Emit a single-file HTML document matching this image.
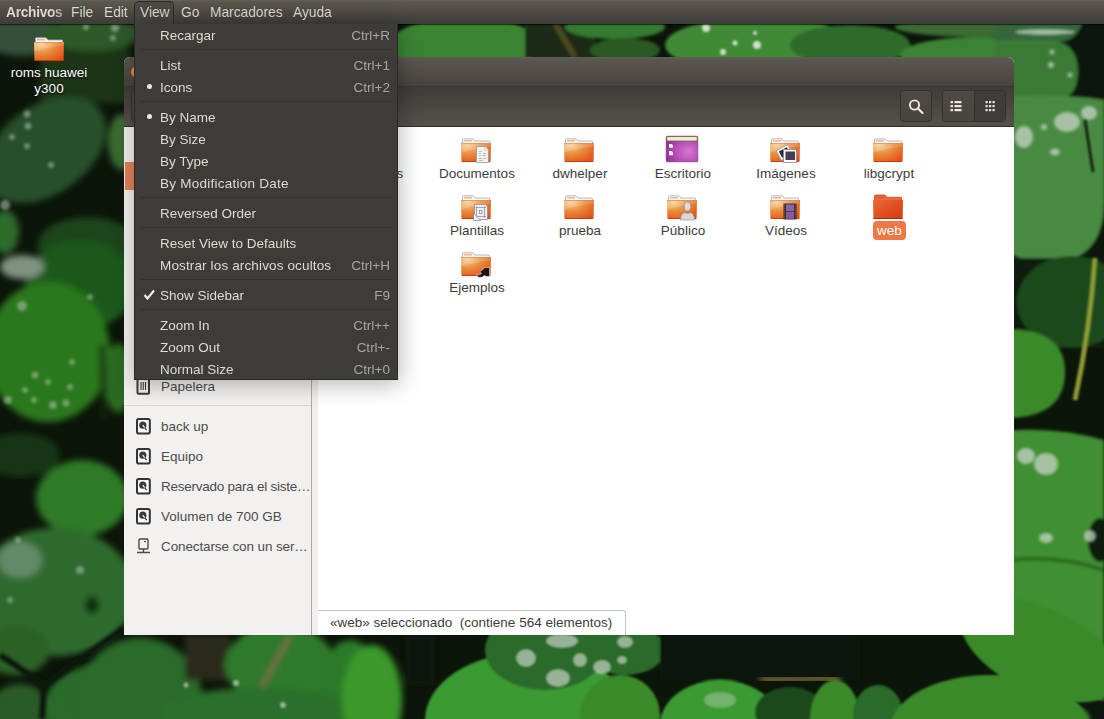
<!DOCTYPE html>
<html><head><meta charset="utf-8">
<style>
html,body{margin:0;padding:0;width:1104px;height:719px;overflow:hidden;background:#14260f;font-family:"Liberation Sans",sans-serif;}
body{position:relative;}
.abs{position:absolute;}
#bg{position:absolute;left:0;top:0;width:1104px;height:719px;}
#panel{position:absolute;left:0;top:0;width:1104px;height:24px;background:linear-gradient(#67635b,#5b5850 6%,#4a4742 60%,#3e3c38);box-shadow:0 1px 1px rgba(0,0,0,0.55);}
.pt{position:absolute;top:5px;font-size:13.75px;text-shadow:0 0 1px rgba(0,0,0,0.5);color:#dfdbd2;line-height:16px;white-space:nowrap;}
#viewbox{position:absolute;left:134px;top:1px;width:40px;height:24px;background:linear-gradient(#4d4b45,#44423d);border:1px solid #2c2b28;border-bottom:none;border-radius:5px 5px 0 0;box-sizing:border-box;}
#win{position:absolute;left:124px;top:57px;width:890px;height:578px;background:#fff;border-radius:6px 6px 0 0;overflow:hidden;}
#title{position:absolute;left:0;top:0;width:890px;height:29px;background:linear-gradient(#615d56,#5a5650 8%,#47443f);border-bottom:1px solid #3a3834;}
#toolbar{position:absolute;left:0;top:30px;width:890px;height:39px;background:linear-gradient(#3f3d39,#55514b);border-bottom:1px solid #2f2d2a;}
#sidebar{position:absolute;left:0;top:70px;width:187px;height:508px;background:#f2f1f0;border-right:1px solid #aeaba5;}
.btn{position:absolute;top:33px;height:32px;border:1px solid #34322e;border-radius:4px;box-sizing:border-box;background:linear-gradient(#4d4a45,#48453f);}
.lab{position:absolute;text-align:center;font-size:13.5px;color:#3c3c3c;line-height:16px;white-space:nowrap;}
.lab.sel{background:#f07746;color:#fff;border-radius:4px;height:19px;line-height:19px;}
.sb{position:absolute;left:161px;font-size:13.5px;color:#4c4c4c;white-space:nowrap;line-height:16px;}
.sbi{position:absolute;left:136px;}
#menu{position:absolute;left:134px;top:24px;width:264px;height:356px;background:#3e3c38;border:1px solid #2b2a27;border-top:none;box-sizing:border-box;box-shadow:1px 4px 22px rgba(0,0,0,0.3);}
.mi{position:absolute;margin-top:1px;left:25px;font-size:13.5px;color:#dfdbd2;white-space:nowrap;line-height:22px;}
.sc{position:absolute;margin-top:1px;right:7px;font-size:13.5px;color:#a9a59d;white-space:nowrap;line-height:22px;}
.sep{position:absolute;left:5px;width:252px;height:1px;background:#34322e;}
#status{position:absolute;left:318px;top:610px;width:308px;height:25px;background:#fff;border:1px solid #c9c6c0;border-bottom:none;border-left:none;box-sizing:border-box;border-radius:0 3px 0 0;}
</style></head><body>
<div id="bg"><svg width="1104" height="719" viewBox="0 0 1104 719" style="position:absolute;left:0;top:0">
<defs>
 <filter id="b5" x="-30%" y="-30%" width="160%" height="160%"><feGaussianBlur stdDeviation="5"/></filter>
 <filter id="b3" x="-30%" y="-30%" width="160%" height="160%"><feGaussianBlur stdDeviation="3"/></filter>
 <filter id="b2" x="-30%" y="-30%" width="160%" height="160%"><feGaussianBlur stdDeviation="1.6"/></filter>
 <filter id="b1" x="-30%" y="-30%" width="160%" height="160%"><feGaussianBlur stdDeviation="0.8"/></filter>
</defs>
<rect width="1104" height="719" fill="#0c150a"/>

<!-- ===== LEFT STRIP ===== -->
<g filter="url(#b3)">
 <rect x="40" y="48" width="90" height="55" fill="#1c3418"/>
 <ellipse cx="22" cy="36" rx="42" ry="20" fill="#34503a"/>
 <ellipse cx="92" cy="34" rx="50" ry="17" fill="#2f5a2c"/>
 <ellipse cx="45" cy="150" rx="68" ry="44" transform="rotate(-35 45 150)" fill="#27502a"/>
 <ellipse cx="122" cy="142" rx="14" ry="28" fill="#3a6a33"/>
 <ellipse cx="88" cy="245" rx="50" ry="28" fill="#1f451d"/>
 <ellipse cx="80" cy="285" rx="55" ry="45" fill="#1f581b"/>
 <ellipse cx="5" cy="232" rx="14" ry="22" fill="#2e6a2a"/>
 <ellipse cx="22" cy="267" rx="22" ry="12" fill="#7f9280"/>
 <ellipse cx="48" cy="352" rx="62" ry="70" fill="#2a781f"/>
 <ellipse cx="118" cy="378" rx="14" ry="35" fill="#2b6a22"/>
 <path d="M102 345 L104 420" stroke="#12240f" stroke-width="5"/>
 <ellipse cx="20" cy="455" rx="40" ry="22" fill="#183418"/>
 <ellipse cx="82" cy="498" rx="46" ry="38" fill="#2f7a28"/>
 <ellipse cx="55" cy="592" rx="80" ry="64" fill="#2e6a2e"/>
 <ellipse cx="20" cy="560" rx="22" ry="18" fill="#648a68"/>
 <ellipse cx="92" cy="605" rx="7" ry="9" fill="#0e2a0c"/>
 <ellipse cx="15" cy="650" rx="35" ry="25" fill="#2a6228"/>
 <ellipse cx="20" cy="712" rx="32" ry="28" fill="#2a5a28"/>
 <ellipse cx="100" cy="705" rx="55" ry="40" fill="#2a6a2a"/>
</g>
<g filter="url(#b2)" stroke="#0c150a" stroke-width="6" fill="none">
 <path d="M0 655 L45 685 L124 628"/>
 <path d="M44 685 L42 719"/>
</g>
<g filter="url(#b2)" fill="#a9bba8" opacity="0.6">
 <circle cx="27" cy="114" r="3.5"/><circle cx="28" cy="126" r="3.5"/><circle cx="12" cy="137" r="3"/><circle cx="27" cy="146" r="3"/><circle cx="51" cy="165" r="3"/>
 <circle cx="86" cy="27" r="3"/><circle cx="115" cy="28" r="4"/><circle cx="113" cy="38" r="3"/>
 <circle cx="5" cy="205" r="5"/>
 <circle cx="22" cy="306" r="5"/><circle cx="90" cy="297" r="3"/>
 <circle cx="35" cy="375" r="3.5"/><circle cx="72" cy="362" r="3"/><circle cx="8" cy="400" r="4"/><circle cx="25" cy="390" r="3"/><circle cx="48" cy="382" r="3"/><circle cx="53" cy="405" r="4"/><circle cx="66" cy="403" r="3.5"/><circle cx="70" cy="387" r="3"/><circle cx="34" cy="400" r="3"/>
 <circle cx="18" cy="540" r="3"/><circle cx="80" cy="570" r="4"/><circle cx="10" cy="600" r="3"/>
</g>

<!-- ===== TOP STRIP ===== -->
<g filter="url(#b2)">
 <ellipse cx="465" cy="45" rx="75" ry="28" fill="#3a8530"/>
 <rect x="525" y="24" width="70" height="34" fill="#1a2a14"/>
 <path d="M555 24 L575 57" stroke="#4a4a22" stroke-width="6"/>
 <ellipse cx="615" cy="27" rx="50" ry="12" fill="#357a32"/>
 <ellipse cx="625" cy="50" rx="35" ry="12" fill="#2a5a20"/>
 <ellipse cx="760" cy="45" rx="95" ry="28" fill="#3f8a35"/>
 <ellipse cx="850" cy="45" rx="60" ry="20" fill="#2f6a2a"/>
 <ellipse cx="980" cy="27" rx="85" ry="10" fill="#3a6a35"/>
 <ellipse cx="980" cy="55" rx="80" ry="18" fill="#3a8232"/>
 <rect x="1060" y="24" width="50" height="34" fill="#0a1408"/>
</g>
<g filter="url(#b1)" fill="#e8efe8" opacity="0.85">
 <circle cx="706" cy="28" r="4"/><circle cx="735" cy="43" r="2.5"/><circle cx="757" cy="45" r="4"/><circle cx="723" cy="52" r="3"/><circle cx="755" cy="33" r="2"/>
 <ellipse cx="1030" cy="33" rx="22" ry="3"/>
</g>

<!-- ===== RIGHT STRIP ===== -->
<g filter="url(#b2)">
 <rect x="1060" y="20" width="50" height="240" fill="#0b140a"/>
 <path d="M995 22 H1082 Q1078 40 1060 42 H995 Z" fill="#36663a"/>
 <path d="M995 40 H1045 Q1078 40 1078 72 Q1078 103 1045 103 H995 Z" fill="#3a7a35"/>
 <path d="M995 98 Q1050 92 1104 100 V200 Q1104 262 1050 262 Q1010 262 995 240 Z" fill="#4a8a42"/>
 <rect x="1000" y="258" width="110" height="90" fill="#0e1a0c"/>
 <ellipse cx="1072" cy="302" rx="55" ry="46" fill="#1f4a1e"/>
 <path d="M995 330 Q1065 325 1065 372 Q1065 420 1000 418 Z" fill="#3a8a2a"/>
 <path d="M995 432 Q1050 425 1104 440 V700 H995 Z" fill="#3f8f30"/>
 <ellipse cx="1100" cy="540" rx="12" ry="22" fill="#0c1a0a"/>
 <path d="M1010 560 Q1060 555 1104 570" stroke="#2a6a22" stroke-width="4" fill="none"/>
 <path d="M995 660 L1060 692 L1104 700 V719 H995 Z" fill="#0c1408"/>
 <path d="M1014 670 L1060 690" stroke="#3a200e" stroke-width="6"/>
 <ellipse cx="1040" cy="719" rx="50" ry="20" fill="#2a6a25"/>
</g>
<path d="M1095 258 Q1090 330 1075 400" stroke="#8e9a36" stroke-width="5" fill="none" filter="url(#b1)"/>
<g filter="url(#b2)" fill="#c8d4c8" opacity="0.75">
 <ellipse cx="1067" cy="122" rx="13" ry="10"/><ellipse cx="1024" cy="137" rx="9" ry="11"/><ellipse cx="1055" cy="152" rx="5" ry="3.5"/><ellipse cx="1089" cy="113" rx="8" ry="7"/><circle cx="1044" cy="127" r="3"/>
 <ellipse cx="1045" cy="32" rx="30" ry="3"/><circle cx="1052" cy="52" r="2.5"/><circle cx="1051" cy="65" r="3"/><circle cx="1070" cy="75" r="2.5"/>
 <ellipse cx="1026" cy="456" rx="9" ry="8"/>
 <ellipse cx="1046" cy="464" rx="12" ry="11"/><ellipse cx="1046" cy="538" rx="7" ry="5"/><ellipse cx="1090" cy="536" rx="6" ry="6"/>
</g>
<path d="M1085 120 L1093 172" stroke="#0c150a" stroke-width="2.5" filter="url(#b1)"/>

<!-- ===== BOTTOM STRIP ===== -->
<g filter="url(#b3)">
 <ellipse cx="140" cy="700" rx="62" ry="62" fill="#2a6a2a"/>
 <rect x="185" y="635" width="45" height="45" fill="#2a2a1a"/>
 <ellipse cx="280" cy="665" rx="55" ry="40" fill="#2f7a2a"/>
 <ellipse cx="350" cy="690" rx="30" ry="50" fill="#2a7a2a"/>
 <ellipse cx="260" cy="712" rx="100" ry="24" fill="#2a6f2a"/>
 <ellipse cx="372" cy="700" rx="30" ry="55" fill="#3a9a2a"/>
 <rect x="405" y="635" width="30" height="50" fill="#0a120a"/>
</g>
<path d="M290 635 L262 687" stroke="#8a6a50" stroke-width="5" filter="url(#b3)"/>
<g filter="url(#b1)">
 <ellipse cx="530" cy="720" rx="105" ry="68" fill="#3a9a30"/>
 <ellipse cx="545" cy="650" rx="60" ry="40" fill="#2a6a2a"/>
 <ellipse cx="625" cy="650" rx="40" ry="25" fill="#2a6a2a"/>
 <ellipse cx="620" cy="715" rx="40" ry="40" fill="#3a8a2a"/>
 <rect x="660" y="635" width="200" height="45" fill="#0a140a"/>
 <ellipse cx="720" cy="725" rx="60" ry="45" fill="#3a9a30"/>
 <ellipse cx="790" cy="712" rx="35" ry="25" fill="#1f4a1e"/>
 <ellipse cx="835" cy="720" rx="25" ry="40" fill="#3a8a2a"/>
 <ellipse cx="878" cy="715" rx="25" ry="30" fill="#2a6a2a"/>
 <ellipse cx="990" cy="730" rx="100" ry="55" fill="#3a8a2a"/>
 <ellipse cx="1040" cy="650" rx="85" ry="42" transform="rotate(25 1040 650)" fill="#3a8a2a"/>
</g>
<path d="M760 680 L840 678" stroke="#7a6a38" stroke-width="7" filter="url(#b3)"/>
<g filter="url(#b1)" fill="#c8d2c8" opacity="0.7">
 <ellipse cx="526" cy="658" rx="10" ry="9"/><ellipse cx="558" cy="678" rx="12" ry="9"/><ellipse cx="562" cy="641" rx="16" ry="7"/><ellipse cx="580" cy="660" rx="7" ry="7"/>
 <ellipse cx="625" cy="642" rx="8" ry="6"/><ellipse cx="602" cy="667" rx="9" ry="7"/><ellipse cx="622" cy="660" rx="5" ry="4"/>
 <ellipse cx="720" cy="700" rx="16" ry="8" opacity="0.6"/>
 <circle cx="283" cy="705" r="3"/><circle cx="236" cy="683" r="3"/><circle cx="186" cy="685" r="2.5"/>
</g>
</svg>
</div>

<svg width="0" height="0" style="position:absolute">
 <defs>
  <radialGradient id="fg" cx="0.22" cy="0.12" r="1.0">
   <stop offset="0" stop-color="#f5d196"/>
   <stop offset="0.45" stop-color="#e9903f"/>
   <stop offset="1" stop-color="#e5511a"/>
  </radialGradient>
  <linearGradient id="fgs" x1="0" y1="0" x2="1" y2="1">
   <stop offset="0" stop-color="#ea6a35"/>
   <stop offset="1" stop-color="#d8350f"/>
  </linearGradient>
  <radialGradient id="dg" cx="0.7" cy="0.6" r="0.8">
   <stop offset="0" stop-color="#d27ad0"/>
   <stop offset="0.6" stop-color="#b446b2"/>
   <stop offset="1" stop-color="#8a2a8c"/>
  </radialGradient>
  <symbol id="fold" viewBox="0 0 40 34">
   <path d="M6.5 12 V7.6 Q6.5 6.8 7.3 6.8 H17 L19 9 H33 Q33.6 9 33.6 9.7 V12 Z" fill="#f7f7f5" stroke="#a8a8a8" stroke-width="0.8"/>
   <rect x="8" y="8.4" width="8" height="0.9" fill="#ec8850"/>
   <path d="M5 11 H35 L34.6 29.2 Q34.6 30 33.8 30 H6.2 Q5.4 30 5.4 29.2 Z" fill="url(#fg)"/>
   <path d="M5.3 11.3 H34.7 V14.5 Q22 15.5 5.3 20.5 Z" fill="#fff" opacity="0.16"/>
   <rect x="5" y="11" width="30" height="0.8" fill="#e9874e" opacity="0.8"/>
   <rect x="6" y="29.1" width="28" height="0.9" fill="#bf3a10"/>
  </symbol>
  <symbol id="foldsel" viewBox="0 0 40 34">
   <path d="M6.5 12 V6.8 Q6.5 6 7.3 6 H17 L19 8.3 H33 Q33.6 8.3 33.6 9 V12 Z" fill="#e86a3a" stroke="#c04a20" stroke-width="0.8"/>
   <rect x="8" y="7.8" width="8" height="0.9" fill="#d85528"/>
   <path d="M5 11 H35 L34.6 30 H5.4 Z" fill="url(#fgs)"/>
   <rect x="5.4" y="29" width="29.2" height="1" fill="#a82a08"/>
  </symbol>
  <symbol id="desk" viewBox="0 0 40 34">
   <rect x="6.2" y="4.2" width="31.6" height="25.6" rx="1.2" fill="url(#dg)" stroke="#6e1a70" stroke-width="0.6"/>
   <rect x="6.8" y="4.6" width="30.4" height="4.4" fill="#ecebd8" stroke="#6d6a3a" stroke-width="0.8"/>
   <path d="M9 12 H11.8 L13 13.2 V15.7 H9 Z M9 19 H11.8 L13 20.2 V23.2 H9 Z" fill="#eeeee8"/>
  </symbol>
 </defs>
</svg>

<!-- desktop icon -->
<svg class="abs" style="left:29px;top:31px" width="40" height="34" viewBox="0 0 40 34"><use href="#fold"/></svg>
<div class="lab" style="left:-11px;top:65px;width:120px;color:#fff;text-shadow:0 1px 2px #000;">roms huawei</div>
<div class="lab" style="left:-11px;top:81px;width:120px;color:#fff;text-shadow:0 1px 2px #000;">y300</div>

<div id="panel">
  <div id="viewbox"></div>
  <span class="pt" style="left:6px;font-weight:bold;letter-spacing:-0.3px;-webkit-mask-image:linear-gradient(to right,#000 80%,rgba(0,0,0,0.6) 100%);">Archivos</span>
  <span class="pt" style="left:71px;">File</span>
  <span class="pt" style="left:104px;">Edit</span>
  <span class="pt" style="left:140px;">View</span>
  <span class="pt" style="left:181px;">Go</span>
  <span class="pt" style="left:210px;">Marcadores</span>
  <span class="pt" style="left:293px;">Ayuda</span>
</div>

<div id="win">
  <div id="title"></div>
  <div class="abs" style="left:7px;top:9px;width:12px;height:12px;border-radius:50%;background:radial-gradient(circle at 40% 35%,#f59a70,#e0561f);"></div>
  <div id="toolbar"></div>
  <div class="btn" style="left:7px;width:60px;"></div>
  <div class="btn" style="left:776px;width:32px;"></div>
  <div class="btn" style="left:818px;width:64px;"></div>
  <div class="abs" style="left:850px;top:34px;width:31px;height:30px;background:#3f3d39;border-radius:0 3px 3px 0;border-left:1px solid #34322e;box-sizing:border-box;"></div>
  <div id="sidebar"></div>
  <div class="abs" style="left:188px;top:70px;width:6px;height:508px;background:#f0efed;"></div>
  <div class="abs" style="left:1px;top:105px;width:186px;height:28px;background:#e5825a;"></div>
</div>

<!-- toolbar icons -->
<svg class="abs" style="left:900px;top:90px" width="32" height="32" viewBox="0 0 32 32">
  <circle cx="14.5" cy="15" r="4.6" fill="none" stroke="#ece8df" stroke-width="1.9"/>
  <path d="M17.8 18.3 L22.5 23" stroke="#ece8df" stroke-width="2.2" stroke-linecap="round"/>
</svg>
<svg class="abs" style="left:942px;top:90px" width="64" height="32" viewBox="0 0 64 32">
  <g fill="#ece8df">
   <rect x="8.5" y="11" width="2.5" height="2.2"/><rect x="12.5" y="11" width="7" height="2.2"/>
   <rect x="8.5" y="15" width="2.5" height="2.2"/><rect x="12.5" y="15" width="7" height="2.2"/>
   <rect x="8.5" y="19" width="2.5" height="2.2"/><rect x="12.5" y="19" width="7" height="2.2"/>
   <rect x="43.5" y="11" width="2.2" height="2.2"/><rect x="47" y="11" width="2.2" height="2.2"/><rect x="50.5" y="11" width="2.2" height="2.2"/>
   <rect x="43.5" y="15" width="2.2" height="2.2"/><rect x="47" y="15" width="2.2" height="2.2"/><rect x="50.5" y="15" width="2.2" height="2.2"/>
   <rect x="43.5" y="19" width="2.2" height="2.2"/><rect x="47" y="19" width="2.2" height="2.2"/><rect x="50.5" y="19" width="2.2" height="2.2"/>
  </g>
</svg>

<svg class="abs" style="left:456px;top:132px" width="40" height="34" viewBox="0 0 40 34"><use href="#fold"/><path d="M20.5 14.5 H29 L32.5 18 V30.5 H20.5 Z" fill="#f0f0f0" stroke="#9a9a9a" stroke-width="0.8"/><path d="M29 14.5 V18 H32.5" fill="#fff" stroke="#9a9a9a" stroke-width="0.6"/><g fill="#b5b5b5"><rect x="23" y="19" width="3" height="0.8"/><rect x="23" y="21" width="2" height="0.8"/><rect x="27" y="21" width="3" height="0.8"/><rect x="23" y="23" width="2" height="0.8"/><rect x="26" y="23" width="4" height="0.8"/><rect x="23" y="26" width="3" height="0.8"/><rect x="27" y="26" width="3" height="0.8"/><rect x="23" y="28" width="4" height="0.8"/></g></svg>
<div class="lab" style="left:417px;top:166px;width:120px;">Documentos</div>
<svg class="abs" style="left:559px;top:132px" width="40" height="34" viewBox="0 0 40 34"><use href="#fold"/></svg>
<div class="lab" style="left:520px;top:166px;width:120px;">dwhelper</div>
<svg class="abs" style="left:765px;top:132px" width="40" height="34" viewBox="0 0 40 34"><use href="#fold"/><g transform="rotate(-28 22 22)"><rect x="14" y="14" width="13" height="11" fill="#fff" stroke="#888" stroke-width="0.6"/><rect x="16" y="16" width="9" height="7" fill="#2b2530"/></g><rect x="18.5" y="17.5" width="13" height="13" fill="#fafafa" stroke="#8a8a8a" stroke-width="0.8"/><rect x="20.5" y="19.5" width="9.5" height="8.5" fill="#4a3a52"/></svg>
<div class="lab" style="left:726px;top:166px;width:120px;">Imágenes</div>
<svg class="abs" style="left:868px;top:132px" width="40" height="34" viewBox="0 0 40 34"><use href="#fold"/></svg>
<div class="lab" style="left:829px;top:166px;width:120px;">libgcrypt</div>
<svg class="abs" style="left:456px;top:189px" width="40" height="34" viewBox="0 0 40 34"><use href="#fold"/><path d="M18.5 15.5 H29.5 L31.5 17.5 V30.5 H18.5 Z" fill="#eeeeee" stroke="#8e8e96" stroke-width="0.8"/><g stroke="#8e90a0" stroke-width="0.8" fill="none"><path d="M20.5 17.5 V29"/><path d="M28.5 17.5 V29"/><path d="M19.5 18.5 H30"/><path d="M19.5 27.5 H30"/><rect x="23.5" y="21.5" width="2.5" height="3"/></g><path d="M17.5 24 L17.5 31.5 L24.5 31.5 Z" fill="#f2f2f2" stroke="#8e8e96" stroke-width="0.8"/></svg>
<div class="lab" style="left:417px;top:223px;width:120px;">Plantillas</div>
<svg class="abs" style="left:559px;top:189px" width="40" height="34" viewBox="0 0 40 34"><use href="#fold"/></svg>
<div class="lab" style="left:520px;top:223px;width:120px;">prueba</div>
<svg class="abs" style="left:662px;top:189px" width="40" height="34" viewBox="0 0 40 34"><use href="#fold"/><ellipse cx="25.5" cy="17.5" rx="3.2" ry="4.6" fill="#dcdcdc" stroke="#8a8a8a" stroke-width="0.6"/><path d="M18.5 31 Q18.5 24.5 23 23.5 Q25.5 25.5 28 23.5 Q32.5 24.5 32.5 31 Z" fill="#d8d8d8" stroke="#8a8a8a" stroke-width="0.6"/></svg>
<div class="lab" style="left:623px;top:223px;width:120px;">Público</div>
<svg class="abs" style="left:765px;top:189px" width="40" height="34" viewBox="0 0 40 34"><use href="#fold"/><rect x="18.5" y="14.5" width="13" height="16" fill="#333"/><rect x="21" y="15.5" width="8" height="6.8" fill="#9060a8"/><rect x="21" y="23" width="8" height="6.8" fill="#8a58a0"/><g fill="#e07a40"><circle cx="19.8" cy="15.8" r="0.45"/><circle cx="19.8" cy="17.8" r="0.45"/><circle cx="19.8" cy="19.8" r="0.45"/><circle cx="19.8" cy="21.8" r="0.45"/><circle cx="19.8" cy="23.8" r="0.45"/><circle cx="19.8" cy="25.8" r="0.45"/><circle cx="19.8" cy="27.8" r="0.45"/><circle cx="19.8" cy="29.6" r="0.45"/><circle cx="30.3" cy="15.8" r="0.45"/><circle cx="30.3" cy="17.8" r="0.45"/><circle cx="30.3" cy="19.8" r="0.45"/><circle cx="30.3" cy="21.8" r="0.45"/><circle cx="30.3" cy="23.8" r="0.45"/><circle cx="30.3" cy="25.8" r="0.45"/><circle cx="30.3" cy="27.8" r="0.45"/><circle cx="30.3" cy="29.6" r="0.45"/></g></svg>
<div class="lab" style="left:726px;top:223px;width:120px;">Vídeos</div>
<svg class="abs" style="left:456px;top:246px" width="40" height="34" viewBox="0 0 40 34"><use href="#fold"/><path d="M33.5 21.5 V30.5 H30 L28.5 29 Q27 31.5 24 31.5 Q21 31.5 20.5 28.5 Q23.5 29.5 25.5 27.5 L23.8 25.8 L29 21.5 Z" fill="#1a1614" stroke="#f3e6e0" stroke-width="0.6"/></svg>
<div class="lab" style="left:417px;top:280px;width:120px;">Ejemplos</div>
<svg class="abs" style="left:660px;top:132px" width="40" height="34" viewBox="0 0 40 34"><use href="#desk"/></svg>
<div class="lab" style="left:623px;top:166px;width:120px;">Escritorio</div>
<svg class="abs" style="left:868px;top:189px" width="40" height="34" viewBox="0 0 40 34"><use href="#foldsel"/></svg>
<div class="lab sel" style="left:873px;top:221px;width:33px;">web</div>
<div class="lab" style="left:311px;top:166px;width:120px;">Descargas</div>

<!-- sidebar items -->
<svg class="sbi" style="top:378px" width="15" height="17" viewBox="0 0 15 17"><path d="M1.5 0 V14.8 Q1.5 15.8 2.5 15.8 H12 Q13 15.8 13 14.8 V0" fill="none" stroke="#3a3a3a" stroke-width="2"/><path d="M5 4 V12 M7.25 4 V12 M9.5 4 V12" stroke="#3a3a3a" stroke-width="1.1"/><rect x="0" y="14" width="15" height="0.01" fill="none"/></svg>
<div class="sb" style="top:379px;">Papelera</div>
<div class="abs" style="left:124px;top:405px;width:187px;height:1px;background:#dbd9d5;"></div>

<svg class="sbi" style="top:418px" width="15" height="17" viewBox="0 0 15 17"><rect x="1" y="1" width="12.8" height="14.6" rx="1.8" fill="#fafafa" stroke="#333" stroke-width="2"/><circle cx="6.8" cy="7.2" r="3.6" fill="#3a3a3a"/><path d="M6.8 7.2 L10 11.5" stroke="#fafafa" stroke-width="1.2"/><path d="M8.5 9.6 L10.6 12.2" stroke="#3a3a3a" stroke-width="1.2"/></svg>
<div class="sb" style="top:419px;">back up</div>
<svg class="sbi" style="top:448px" width="15" height="17" viewBox="0 0 15 17"><rect x="1" y="1" width="12.8" height="14.6" rx="1.8" fill="#fafafa" stroke="#333" stroke-width="2"/><circle cx="6.8" cy="7.2" r="3.6" fill="#3a3a3a"/><path d="M6.8 7.2 L10 11.5" stroke="#fafafa" stroke-width="1.2"/><path d="M8.5 9.6 L10.6 12.2" stroke="#3a3a3a" stroke-width="1.2"/></svg>
<div class="sb" style="top:449px;">Equipo</div>
<svg class="sbi" style="top:478px" width="15" height="17" viewBox="0 0 15 17"><rect x="1" y="1" width="12.8" height="14.6" rx="1.8" fill="#fafafa" stroke="#333" stroke-width="2"/><circle cx="6.8" cy="7.2" r="3.6" fill="#3a3a3a"/><path d="M6.8 7.2 L10 11.5" stroke="#fafafa" stroke-width="1.2"/><path d="M8.5 9.6 L10.6 12.2" stroke="#3a3a3a" stroke-width="1.2"/></svg>
<div class="sb" style="top:479px;letter-spacing:-0.25px;">Reservado para el siste…</div>
<svg class="sbi" style="top:508px" width="15" height="17" viewBox="0 0 15 17"><rect x="1" y="1" width="12.8" height="14.6" rx="1.8" fill="#fafafa" stroke="#333" stroke-width="2"/><circle cx="6.8" cy="7.2" r="3.6" fill="#3a3a3a"/><path d="M6.8 7.2 L10 11.5" stroke="#fafafa" stroke-width="1.2"/><path d="M8.5 9.6 L10.6 12.2" stroke="#3a3a3a" stroke-width="1.2"/></svg>
<div class="sb" style="top:509px;">Volumen de 700 GB</div>
<svg class="sbi" style="top:538px" width="15" height="16" viewBox="0 0 15 16"><rect x="3" y="1" width="9" height="10" rx="1" fill="none" stroke="#4a4a4a" stroke-width="1.4"/><rect x="8" y="3" width="2" height="1.2" fill="#4a4a4a"/><path d="M7.5 11 V14 M1 14.5 H14" stroke="#4a4a4a" stroke-width="1.4"/></svg>
<div class="sb" style="top:539px;letter-spacing:-0.12px;">Conectarse con un ser…</div>

<div id="status"></div>
<div class="abs" style="left:330px;top:615px;font-size:13.5px;color:#3c3c3c;line-height:16px;white-space:pre;">«web» seleccionado  (contiene 564 elementos)</div>

<div id="menu">
  <div class="mi" style="top:0px;">Recargar</div><div class="sc" style="top:0px;">Ctrl+R</div>
  <div class="sep" style="top:25px;"></div>
  <div class="mi" style="top:30px;">List</div><div class="sc" style="top:30px;">Ctrl+1</div>
  <div class="mi" style="top:52px;">Icons</div><div class="sc" style="top:52px;">Ctrl+2</div>
  <div class="sep" style="top:77px;"></div>
  <div class="mi" style="top:82px;">By Name</div>
  <div class="mi" style="top:104px;">By Size</div>
  <div class="mi" style="top:126px;">By Type</div>
  <div class="mi" style="top:148px;letter-spacing:0.25px;">By Modification Date</div>
  <div class="sep" style="top:173px;"></div>
  <div class="mi" style="top:178px;">Reversed Order</div>
  <div class="sep" style="top:203px;"></div>
  <div class="mi" style="top:208px;">Reset View to Defaults</div>
  <div class="mi" style="top:230px;letter-spacing:0.14px;">Mostrar los archivos ocultos</div><div class="sc" style="top:230px;">Ctrl+H</div>
  <div class="sep" style="top:255px;"></div>
  <div class="mi" style="top:260px;">Show Sidebar</div><div class="sc" style="top:260px;">F9</div>
  <div class="sep" style="top:285px;"></div>
  <div class="mi" style="top:290px;">Zoom In</div><div class="sc" style="top:290px;">Ctrl++</div>
  <div class="mi" style="top:312px;">Zoom Out</div><div class="sc" style="top:312px;">Ctrl+-</div>
  <div class="mi" style="top:334px;">Normal Size</div><div class="sc" style="top:334px;">Ctrl+0</div>
  <div class="abs" style="left:12px;top:60px;width:5px;height:5px;border-radius:50%;background:#eeeae2;"></div>
  <div class="abs" style="left:12px;top:90px;width:5px;height:5px;border-radius:50%;background:#eeeae2;"></div>
  <svg class="abs" style="left:8px;top:265px" width="13" height="12" viewBox="0 0 13 12"><path d="M1.5 6 L4.5 9.5 L11 1.5" fill="none" stroke="#eeeae2" stroke-width="2.2"/></svg>
</div>
</body></html>
